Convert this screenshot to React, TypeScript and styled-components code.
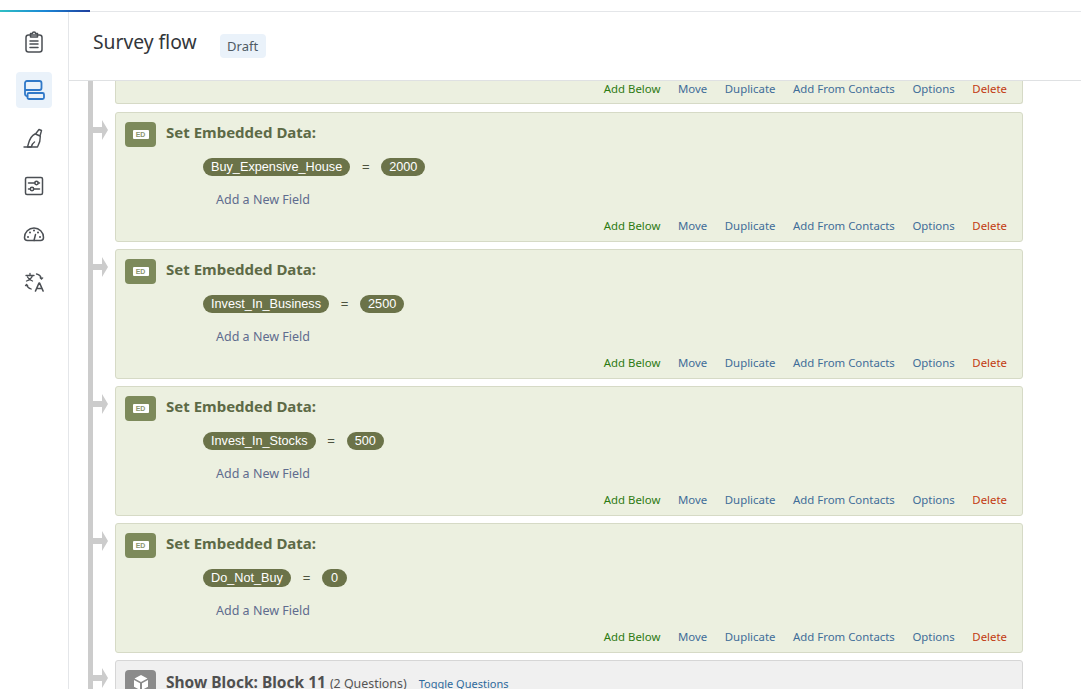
import React from "react";
import styled, { createGlobalStyle } from "styled-components";

const Global = createGlobalStyle`
  html, body { margin: 0; padding: 0; height: 100%; overflow: hidden; background: #fff; }
  #root { height: 100%; }
`;

const Page = styled.div`
  display: flex;
  flex-direction: column;
  width: 1081px;
  height: 689px;
  overflow: hidden;
  font-family: "Liberation Sans", Arial, sans-serif;
`;
const TopBar = styled.div`
  height: 11px;
  flex: none;
  border-bottom: 1px solid #e4e6e9;
  display: flex;
  align-items: flex-end;
`;
const Progress = styled.div`
  width: 90px;
  height: 2px;
  margin-bottom: -1px;
  background: linear-gradient(90deg, #2fbfc4 0%, #1b87d6 50%, #1f3f9e 100%);
`;
const Body = styled.div`
  flex: 1;
  display: flex;
  min-height: 0;
`;
const Sidebar = styled.nav`
  width: 68px;
  flex: none;
  border-right: 1px solid #e4e6e9;
  display: flex;
  flex-direction: column;
  align-items: center;
  gap: 12px;
  padding-top: 12px;
  box-sizing: content-box;
`;
const NavButton = styled.div<{ $active?: boolean }>`
  width: 36px;
  height: 36px;
  border-radius: 4px;
  display: flex;
  align-items: center;
  justify-content: center;
  background: ${(p) => (p.$active ? "#eaf2fa" : "transparent")};
  color: ${(p) => (p.$active ? "#2f78c8" : "#4b4f54")};
`;
const Main = styled.main`
  flex: 1;
  min-width: 0;
  display: flex;
  flex-direction: column;
`;
const Header = styled.header`
  height: 68px;
  flex: none;
  border-bottom: 1px solid #dfe1e3;
  display: flex;
  align-items: center;
  padding-left: 24px;
  gap: 23px;
`;
const Title = styled.h1`
  margin: 0 0 8px;
  font: 400 19.3px/28px "Noto Sans", sans-serif;
  color: #32363a;
`;
const Badge = styled.span`
  height: 24px;
  width: 46px;
  border-radius: 4px;
  background: #eaf2fa;
  color: #4f5a64;
  font: 400 13px/24px "Noto Sans", sans-serif;
  text-align: center;
`;
const Flow = styled.div`
  flex: 1;
  min-height: 0;
  overflow: hidden;
  margin-left: 19px;
  border-left: 5px solid #cccccc;
  padding-left: 22px;
  margin-right: 58px;
  display: flex;
  flex-direction: column;
  gap: 7px;
`;
const Card = styled.section<{ $tone?: "green" | "gray"; $clipped?: boolean }>`
  position: relative;
  flex: none;
  box-sizing: border-box;
  height: ${(p) => (p.$clipped ? "23px" : "130px")};
  margin-bottom: ${(p) => (p.$clipped ? "1px" : "0")};
  border: 1px solid ${(p) => (p.$tone === "gray" ? "#d6d6d6" : "#d6dac6")};
  border-top-width: ${(p) => (p.$clipped ? 0 : "1px")};
  border-radius: ${(p) => (p.$clipped ? "0 0 3px 3px" : "3px")};
  background: ${(p) => (p.$tone === "gray" ? "#f0f0f0" : "#ecf0e0")};
  padding: ${(p) => (p.$clipped ? "0 9px" : "9px 9px 0")};
  display: flex;
  flex-direction: column;
`;
const Arrow = styled.svg`
  position: absolute;
  left: -23px;
  top: 7px;
  width: 15px;
  height: 20px;
`;
const CardHead = styled.div`
  display: flex;
  align-items: center;
  gap: 10px;
  height: 25px;
`;
const IconTile = styled.div<{ $tone?: "green" | "gray" }>`
  width: 31px;
  height: 25px;
  flex: none;
  border-radius: 4px;
  background: ${(p) => (p.$tone === "gray" ? "#8b8b8b" : "#7d8a5b")};
  display: flex;
  align-items: center;
  justify-content: center;
`;
const EdMark = styled.span`
  width: 16px;
  height: 9px;
  border-radius: 1px;
  background: #fff;
  color: #8b9670;
  font: 700 7px/9px "Liberation Sans", sans-serif;
  text-align: center;
`;
const CardTitle = styled.h2<{ $tone?: "green" | "gray" }>`
  margin: ${(p) => (p.$tone === "gray" ? "0" : "0 0 5px")};
  font: 700 ${(p) => (p.$tone === "gray" ? "15.5px" : "15px")}/20px "Noto Sans", sans-serif;
  color: ${(p) => (p.$tone === "gray" ? "#505050" : "#5d6a46")};
  white-space: nowrap;
`;
const Note = styled.span`
  font: 400 12.4px/20px "Noto Sans", sans-serif;
  color: #555;
  margin-left: 4px;
`;
const Toggle = styled.a`
  font: 400 11px/20px "Noto Sans", sans-serif;
  color: #2f6a9c;
  margin-left: 12px;
`;
const FieldRow = styled.div`
  display: flex;
  align-items: center;
  height: 18px;
  margin: 11px 0 0 78px;
`;
const Chip = styled.span`
  height: 18px;
  min-width: 25px;
  box-sizing: border-box;
  text-align: center;
  border-radius: 9px;
  padding: 0 8px;
  background: #6b7349;
  color: #fff;
  font: 400 12.7px/18px "Liberation Sans", sans-serif;
  white-space: nowrap;
`;
const Equals = styled.span`
  width: 31px;
  text-align: center;
  font: 400 13px/18px "Liberation Sans", sans-serif;
  color: #4d5340;
`;
const AddField = styled.a`
  margin: 14.7px 0 0 91px;
  font: 400 12.5px/18px "Noto Sans", sans-serif;
  color: #5f6c8e;
`;
const Actions = styled.div<{ $clipped?: boolean }>`
  margin-top: auto;
  margin-bottom: ${(p) => (p.$clipped ? "7px" : "8px")};
  padding-right: 6px;
  display: flex;
  justify-content: flex-end;
  gap: 17.6px;
  font: 400 11.4px/14px "Noto Sans", sans-serif;
`;
const Action = styled.a<{ $kind?: "add" | "delete" }>`
  color: ${(p) => (p.$kind === "add" ? "#2c7a12" : p.$kind === "delete" ? "#c23a10" : "#3f6d98")};
  white-space: nowrap;
`;

const Icon = (p: { children: React.ReactNode }) => (
  <svg width={24} height={24} viewBox="0 0 24 24" fill="none" stroke="currentColor" strokeWidth="1.5" strokeLinecap="round" strokeLinejoin="round">
    {p.children}
  </svg>
);

const rows = [
  { name: "Buy_Expensive_House", value: "2000" },
  { name: "Invest_In_Business", value: "2500" },
  { name: "Invest_In_Stocks", value: "500" },
  { name: "Do_Not_Buy", value: "0" },
];

const Links = (p: { clipped?: boolean }) => (
  <Actions $clipped={p.clipped}>
    <Action $kind="add">Add Below</Action>
    <Action>Move</Action>
    <Action>Duplicate</Action>
    <Action>Add From Contacts</Action>
    <Action>Options</Action>
    <Action $kind="delete">Delete</Action>
  </Actions>
);

const FlowArrow = () => (
  <Arrow viewBox="0 0 15 20">
    <path d="M0 7h9V0l6 10-6 10v-7H0z" fill="#cccccc" />
  </Arrow>
);

export default function App() {
  return (
    <Page>
      <Global />
      <TopBar><Progress /></TopBar>
      <Body>
        <Sidebar>
          <NavButton>
            <Icon>
              <rect x="4" y="5" width="16" height="17" rx="2.5" />
              <path d="M8.500 5V3.500h2a1.500 1.500 0 0 1 3 0h2V7h-7zM8 11h8M8 14h8M8 17.500h8" />
            </Icon>
          </NavButton>
          <NavButton $active>
            <Icon>
              <path d="M3 12V5a2 2 0 0 1 2-2h12.500a2 2 0 0 1 2 2v5a2 2 0 0 1-2 2H3v4a2 2 0 0 0 2.500 2" strokeWidth="1.8" />
              <rect x="5.500" y="15" width="16.500" height="6" rx="1.500" strokeWidth="1.8" />
            </Icon>
          </NavButton>
          <NavButton>
            <Icon>
              <path d="M17 3.500l2.500 1-1.500 5.500-4.500-2z" strokeWidth="1.4" />
              <path d="M13 8c-3 1.500-5 4-6.500 9.500l-1 3.500H15.500c2-3.500 3-7 2.800-10.500" strokeWidth="1.4" />
              <path d="M2 21h7M9.500 20.500c.5-2 1.500-3.500 3-4.500" strokeWidth="1.4" />
            </Icon>
          </NavButton>
          <NavButton>
            <Icon>
              <rect x="3.500" y="3.500" width="17" height="17" rx="1.500" />
              <circle cx="14.500" cy="9" r="1.700" />
              <circle cx="10" cy="15" r="1.700" />
              <path d="M6.500 9h6.300M16.200 9h1.300M6.500 15h1.800M11.700 15h5.800" />
            </Icon>
          </NavButton>
          <NavButton>
            <Icon>
              <path d="M5.500 18.500h13a3 3 0 0 0 3-3 9.500 9.500 0 0 0-19 0 3 3 0 0 0 3 3z" />
              <path d="M12 18.500l1.500-6" />
              <path d="M6 15h.01M8 10.500h.01M12 8.500h.01M16 10.500h.01M18 15h.01" strokeWidth="2" />
            </Icon>
          </NavButton>
          <NavButton>
            <Icon>
              <path d="M4 5.500h8M8 3.500v2M10.500 5.500c-1 3-3 4.500-6 5.500M5.500 7c1 2 2.500 3.200 5 4" strokeWidth="1.300" />
              <path d="M14.500 4c2.500.5 4.500 2.500 5 5M18.200 7.800l1.300 1.300 1.200-1.200M4.500 14.500c.5 2 2.200 3.700 4.700 4.500M3.500 15.600l1-1.100 1.200 .9" strokeWidth="1.300" />
              <path d="M13.500 21l3.500-8h.6l3.500 8M15 18.500h5" strokeWidth="1.600" />
            </Icon>
          </NavButton>
        </Sidebar>
        <Main>
          <Header>
            <Title>Survey flow</Title>
            <Badge>Draft</Badge>
          </Header>
          <Flow>
            <Card $clipped>
              <Links clipped />
            </Card>
            {rows.map((r) => (
              <Card key={r.name}>
                <FlowArrow />
                <CardHead>
                  <IconTile><EdMark>ED</EdMark></IconTile>
                  <CardTitle>Set Embedded Data:</CardTitle>
                </CardHead>
                <FieldRow>
                  <Chip>{r.name}</Chip>
                  <Equals>=</Equals>
                  <Chip>{r.value}</Chip>
                </FieldRow>
                <AddField>Add a New Field</AddField>
                <Links />
              </Card>
            ))}
            <Card $tone="gray">
              <FlowArrow />
              <CardHead>
                <IconTile $tone="gray">
                  <svg width="16" height="17" viewBox="0 0 16 17" fill="#fff">
                    <path d="M8 1l6.500 3.500L8 8 1.500 4.500zM1 6l6 3.300V16l-6-3.300zM15 6L9 9.300V16l6-3.300z" />
                  </svg>
                </IconTile>
                <CardTitle $tone="gray">
                  Show Block: Block 11
                  <Note>(2 Questions)</Note>
                  <Toggle>Toggle Questions</Toggle>
                </CardTitle>
              </CardHead>
            </Card>
          </Flow>
        </Main>
      </Body>
    </Page>
  );
}
